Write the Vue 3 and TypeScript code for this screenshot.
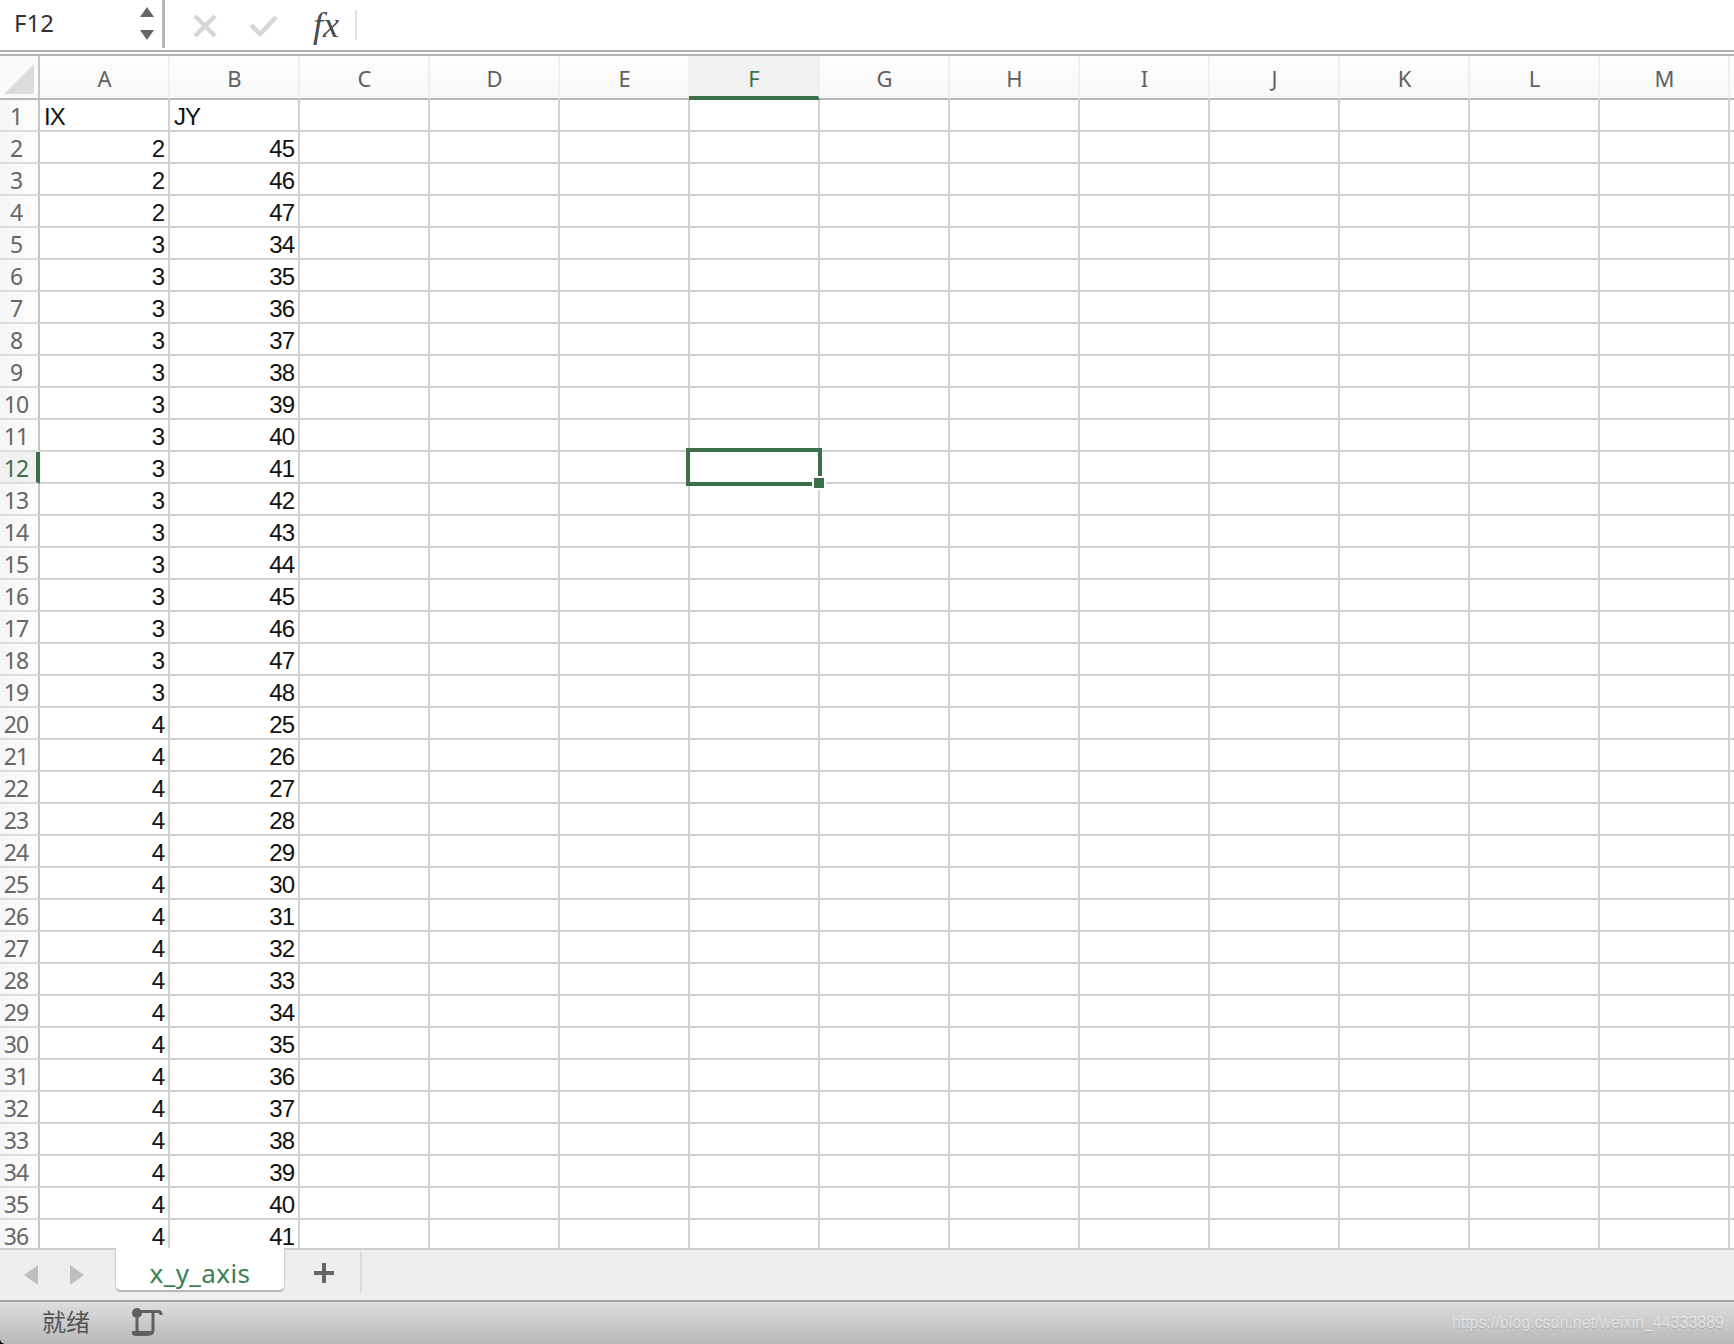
<script setup lang="ts">
const columns = ['A', 'B', 'C', 'D', 'E', 'F', 'G', 'H', 'I', 'J', 'K', 'L', 'M', 'N']

interface Row {
  id: number
  a: string | number
  b: string | number
}

const rows: Row[] = [{ id: 1, a: 'IX', b: 'JY' }]
for (let id = 2; id <= 37; id++) {
  let a = 4
  let b = id + 5
  if (id <= 4) {
    a = 2
    b = id + 43
  } else if (id <= 19) {
    a = 3
    b = id + 29
  }
  rows.push({ id, a, b })
}
</script>

<template>
  <div class="app">
    <header class="formula-bar">
      <div class="name-box">
        <span class="name">F12</span>
        <div class="spinner">
          <i class="up"></i>
          <i class="down"></i>
        </div>
      </div>
      <svg class="tool-x" width="24" height="24" viewBox="0 0 24 24">
        <path d="M2 2 L22 22 M22 2 L2 22" stroke="#d6d6d6" stroke-width="4.500" fill="none" />
      </svg>
      <svg class="tool-check" width="30" height="24" viewBox="0 0 30 24">
        <path d="M2 11 L11 20 L27 3" stroke="#d6d6d6" stroke-width="4.500" fill="none" />
      </svg>
      <span class="fx">fx</span>
      <span class="fx-sep"></span>
    </header>

    <section class="sheet">
      <div class="head-row">
        <div class="corner"><span class="triangle"></span></div>
        <div
          v-for="col in columns"
          :key="col"
          class="col-head"
          :class="{ active: col === 'F' }"
        >{{ col }}</div>
      </div>
      <div v-for="row in rows" :key="row.id" class="row">
        <div class="row-head" :class="{ active: row.id === 12 }">{{ row.id }}</div>
        <div class="cell" :class="{ text: row.id === 1 }">{{ row.a }}</div>
        <div class="cell" :class="{ text: row.id === 1 }">{{ row.b }}</div>
        <div v-for="col in columns.slice(2)" :key="col" class="cell"></div>
      </div>
      <div class="selection"><span class="handle"></span></div>
    </section>

    <nav class="tabs">
      <i class="arrow prev"></i>
      <i class="arrow next"></i>
      <div class="tab">x_y_axis</div>
      <svg class="plus" width="20" height="20" viewBox="0 0 20 20">
        <path d="M10 0 V20 M0 10 H20" stroke="#666" stroke-width="4" fill="none" />
      </svg>
      <span class="tab-sep"></span>
    </nav>

    <footer class="status">
      <span class="ready">就绪</span>
      <svg class="macro" width="32" height="30" viewBox="0 0 32 30">
        <circle cx="6" cy="6" r="5" fill="#606060" />
        <path d="M10 4.500 H27 Q30 4.500 30 8 M22 5 V23 Q22 27 18 27 M6 11 V24" stroke="#606060" stroke-width="3" fill="none" />
        <path d="M1 24 H20 L21 26 Q20 29 16 29 H5 Q1 29 1 26 Z" fill="#606060" />
      </svg>
      <span class="watermark">https://blog.csdn.net/weixin_44333889</span>
    </footer>
  </div>
</template>

<style scoped>
.app {
  width: 1734px;
  height: 1344px;
  display: flex;
  flex-direction: column;
  overflow: hidden;
  background: #000;
  font-family: "Liberation Sans", Arial, sans-serif;
}

.formula-bar {
  height: 56px;
  box-sizing: border-box;
  flex-shrink: 0;
  display: flex;
  align-items: flex-start;
  background: #fff;
  border-bottom: 2px solid #b4b4b4;
  box-shadow: inset 0 -2px 0 #fff, inset 0 -4px 0 #b0b0b0;
}

.name-box {
  width: 165px;
  height: 48px;
  box-sizing: border-box;
  display: flex;
  align-items: center;
  justify-content: space-between;
  padding: 0 8px 4px 14px;
  border-right: 3px solid #b8b8b8;
}

.name {
  font-family: "Noto Sans", sans-serif;
  font-size: 24px;
  color: #333;
}

.spinner {
  display: flex;
  flex-direction: column;
  gap: 13px;
  padding-top: 3px;
}

.spinner i {
  display: block;
  width: 0;
  height: 0;
  border-left: 7px solid transparent;
  border-right: 7px solid transparent;
}

.spinner .up {
  border-bottom: 10px solid #666;
}

.spinner .down {
  border-top: 10px solid #666;
}

.tool-x {
  margin: 14px 0 0 28px;
}

.tool-check {
  margin: 14px 0 0 32px;
}

.fx {
  margin: 3px 0 0 34px;
  font-family: "Liberation Serif", serif;
  font-style: italic;
  font-size: 36px;
  line-height: 44px;
  color: #4a4a4a;
}

.fx-sep {
  width: 2px;
  height: 30px;
  margin: 10px 0 0 16px;
  background: #e2e2e2;
}

.sheet {
  position: relative;
  flex: 1;
  min-height: 0;
  overflow: hidden;
  background: #fff;
}

.head-row {
  display: flex;
  height: 44px;
}

.corner {
  width: 40px;
  box-sizing: border-box;
  flex-shrink: 0;
  padding: 8px 0 0 4px;
  border-right: 2px solid #c6c6c6;
  border-bottom: 2px solid #b8b8b8;
  background: #fafafa;
}

.triangle {
  display: block;
  width: 0;
  height: 0;
  border-left: 30px solid transparent;
  border-bottom: 30px solid #dcdcdc;
}

.col-head {
  width: 130px;
  box-sizing: border-box;
  flex-shrink: 0;
  display: flex;
  align-items: center;
  justify-content: center;
  padding: 2px 0 0 1px;
  font-family: "Noto Sans", sans-serif;
  font-size: 22px;
  color: #5f5f5f;
  background: linear-gradient(#fdfdfd, #f8f8f8);
  border-right: 2px solid #efefef;
  border-bottom: 2px solid #b8b8b8;
}

.col-head.active {
  color: #3c7049;
  background: #f1f1f1;
  margin-left: -1px;
  width: 131px;
  border-bottom: 4px solid #3c7049;
  height: 44px;
  padding-top: 4px;
}

.row {
  display: flex;
  height: 32px;
}

.row-head {
  width: 40px;
  box-sizing: border-box;
  flex-shrink: 0;
  display: flex;
  align-items: center;
  justify-content: center;
  padding: 2px 6px 0 0;
  font-family: "Noto Sans", sans-serif;
  font-size: 23px;
  letter-spacing: -1px;
  color: #666;
  background: linear-gradient(90deg, #f6f6f6, #fdfdfd);
  border-right: 2px solid #c6c6c6;
  border-bottom: 2px solid #dcdcdc;
}

.row-head.active {
  color: #3c7049;
  background: #f1f1f1;
  border-right: 4px solid #3c7049;
  padding-right: 4px;
}

.cell {
  width: 130px;
  box-sizing: border-box;
  flex-shrink: 0;
  padding: 0 4px;
  font-size: 24px;
  letter-spacing: -1px;
  line-height: 33px;
  text-align: right;
  color: #111;
  border-right: 2px solid #d2d2d2;
  border-bottom: 2px solid #d2d2d2;
}

.cell.text {
  text-align: left;
}

.selection {
  position: absolute;
  left: 686px;
  top: 392px;
  width: 136px;
  height: 38px;
  box-sizing: border-box;
  border: 4px solid #3c7049;
}

.handle {
  position: absolute;
  right: -6px;
  bottom: -6px;
  width: 10px;
  height: 10px;
  background: #3c7049;
  outline: 2px solid #fff;
}

.tabs {
  height: 52px;
  box-sizing: border-box;
  flex-shrink: 0;
  display: flex;
  align-items: flex-start;
  background: #eee;
  border-top: 2px solid #cfcfcf;
}

.arrow {
  display: block;
  width: 0;
  height: 0;
  margin-top: 15px;
  border-top: 10px solid transparent;
  border-bottom: 10px solid transparent;
}

.arrow.prev {
  margin-left: 24px;
  border-right: 14px solid #bebebe;
}

.arrow.next {
  margin-left: 32px;
  border-left: 14px solid #bebebe;
}

.tab {
  width: 170px;
  height: 44px;
  box-sizing: border-box;
  margin: -2px 0 0 31px;
  text-align: center;
  font-family: "Noto Sans", sans-serif;
  font-size: 26px;
  letter-spacing: 0.4px;
  line-height: 50px;
  color: #3c8054;
  background: #fff;
  border: 1px solid #c8c8c8;
  border-top: none;
  border-bottom: 2px solid #b8b8b8;
  border-radius: 0 0 6px 6px;
}

.plus {
  margin: 13px 0 0 29px;
}

.tab-sep {
  width: 2px;
  height: 40px;
  margin: 2px 0 0 26px;
  background: #d8d8d8;
}

.status {
  height: 44px;
  box-sizing: border-box;
  flex-shrink: 0;
  display: flex;
  align-items: center;
  padding-left: 42px;
  background: linear-gradient(#dedede, #b8b8b8);
  border-top: 2px solid #a2a2a2;
  border-bottom-left-radius: 5px;
}

.ready {
  font-family: "Noto Sans CJK SC", sans-serif;
  font-size: 24px;
  line-height: 24px;
  margin-top: -4px;
  color: #555;
}

.macro {
  margin: -2px 0 0 41px;
}

.watermark {
  margin-left: auto;
  padding-right: 10px;
  font-size: 16px;
  color: rgba(255, 255, 255, 0.6);
  text-shadow: 0 1px 1px rgba(0, 0, 0, 0.15);
}
</style>
